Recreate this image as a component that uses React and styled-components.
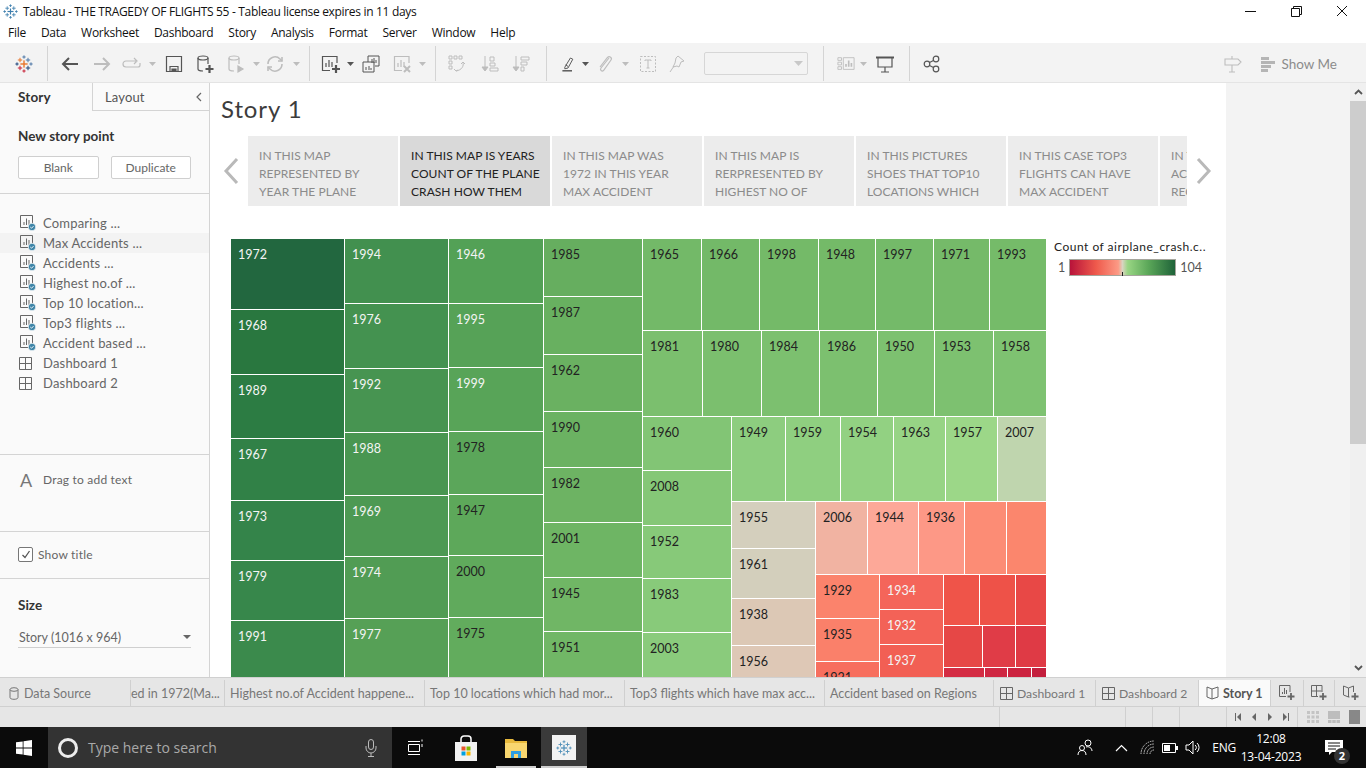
import React from 'react'
import styled, { createGlobalStyle } from 'styled-components'

const SYS = '"Open Sans", "Noto Sans", sans-serif'
const TB = 'Lato, "Open Sans", sans-serif'

const Global = createGlobalStyle`
  html, body { margin: 0; padding: 0; height: 100%; overflow: hidden; background: #fff; }
  * { box-sizing: border-box; }
  #root { height: 768px; }
`

// --- treemap data: size is the pixel extent along the parent's direction
const col = (s, ...c) => ({ d: 'column', s, c })
const row = (s, ...c) => ({ d: 'row', s, c })
const leaf = (t, fill, s, light) => ({ t, fill, s, light })

const tree = row(null,
  col(113,
    leaf('1972', '#22673f', 70, 1), leaf('1968', '#29773f', 64, 1), leaf('1989', '#2c7c43', 63, 1),
    leaf('1967', '#318147', 61, 1), leaf('1973', '#34844a', 59, 1), leaf('1979', '#37874b', 59, 1), leaf('1991', '#3b8a4c', null, 1)),
  col(103,
    leaf('1994', '#42904f', 64, 1), leaf('1976', '#449250', 64, 1), leaf('1992', '#479451', 63, 1),
    leaf('1988', '#499651', 62, 1), leaf('1969', '#4d9953', 60, 1), leaf('1974', '#519c54', 61, 1), leaf('1977', '#56a056', null, 1)),
  col(94,
    leaf('1946', '#53a156', 64, 1), leaf('1995', '#56a257', 63, 1), leaf('1999', '#58a458', 63, 1),
    leaf('1978', '#5ba65a', 62), leaf('1947', '#5da85a', 60), leaf('2000', '#60aa5c', 61), leaf('1975', '#62ac5d', null)),
  col(98,
    leaf('1985', '#66ae5f', 57), leaf('1987', '#68b060', 57), leaf('1962', '#6ab161', 56), leaf('1990', '#6bb262', 55),
    leaf('1982', '#6db363', 54), leaf('2001', '#6eb564', 54), leaf('1945', '#70b665', 53), leaf('1951', '#71b766', null)),
  col(null,
    row(91,
      leaf('1965', '#73b968', 58), leaf('1966', '#73b968', 57), leaf('1998', '#74ba68', 58), leaf('1948', '#74ba68', 56),
      leaf('1997', '#74ba69', 57), leaf('1971', '#75ba69', 55), leaf('1993', '#75bb69', null)),
    row(85,
      leaf('1981', '#7bbf6e', 59), leaf('1980', '#7bbf6e', 58), leaf('1984', '#7cc06f', 57), leaf('1986', '#7cc06f', 57),
      leaf('1950', '#7dc170', 56), leaf('1953', '#7dc170', 58), leaf('1958', '#7ec271', null)),
    row(null,
      col(88,
        leaf('1960', '#82c575', 53), leaf('2008', '#85c777', 54), leaf('1952', '#87c979', 52),
        leaf('1983', '#88ca7a', 53), leaf('2003', '#8acb7c', null)),
      col(null,
        row(84,
          leaf('1949', '#8dcd7f', 53), leaf('1959', '#8fcf80', 54), leaf('1954', '#92d182', 52),
          leaf('1963', '#97d485', 51), leaf('1957', '#9cd788', 51), leaf('2007', '#bfd5ae', null)),
        row(null,
          col(83,
            leaf('1955', '#d4cfbd', 46), leaf('1961', '#d3cfbc', 49), leaf('1938', '#dcc8b5', 46), leaf('1956', '#dec8b6', null)),
          col(null,
            row(72,
              leaf('2006', '#f1b3a2', 51), leaf('1944', '#fda898', 50), leaf('1936', '#fd9886', 45),
              leaf('', '#fc8c75', 41), leaf('', '#fb866d', null)),
            row(null,
              col(63, leaf('1929', '#fb836c', 43), leaf('1935', '#fa806a', 42), leaf('1921', '#f76f5e', null)),
              col(63, leaf('1934', '#f4655a', 34, 1), leaf('1932', '#f36257', 34, 1), leaf('1937', '#f25f54', null, 1)),
              col(null,
                row(50, leaf('', '#ef5449', 35), leaf('', '#ee5248', 35), leaf('', '#e84846', null)),
                row(41, leaf('', '#e64746', 38), leaf('', '#e03c47', 32), leaf('', '#df3a45', null)),
                row(null, leaf('', '#d42c43', 40), leaf('', '#cf2742', 22), leaf('', '#cc2340', 23), leaf('', '#c41f3d', null)))))))))
)

const storyPoints = [
  ['IN THIS MAP', 'REPRESENTED BY', 'YEAR THE PLANE'],
  ['IN THIS MAP IS YEARS', 'COUNT OF THE PLANE', 'CRASH HOW THEM'],
  ['IN THIS MAP WAS', '1972 IN THIS YEAR', 'MAX ACCIDENT'],
  ['IN THIS MAP IS', 'RERPRESENTED BY', 'HIGHEST NO OF'],
  ['IN THIS PICTURES', 'SHOES THAT TOP10', 'LOCATIONS WHICH'],
  ['IN THIS CASE TOP3', 'FLIGHTS CAN HAVE', 'MAX ACCIDENT'],
  ['IN THIS', 'ACCIDENT', 'REGIONS'],
]

const sheets = ['Comparing ...', 'Max Accidents ...', 'Accidents ...', 'Highest no.of ...', 'Top 10 location...', 'Top3 flights ...', 'Accident based ...']

const menus = ['File', 'Data', 'Worksheet', 'Dashboard', 'Story', 'Analysis', 'Format', 'Server', 'Window', 'Help']

// --- drawings
const Line = ({ children, w = 20, h = 20, sw = 1.2 }) => (
  <svg width={w} height={h} viewBox={`0 0 ${w} ${h}`} fill="none" stroke="currentColor" strokeWidth={sw}>{children}</svg>
)

const Plus = ({ x, y, r = 3, w = 1, c }) => (
  <g fill={c} stroke="none">
    <rect x={x - w / 2} y={y - r} width={w} height={r * 2} />
    <rect x={x - r} y={y - w / 2} width={r * 2} height={w} />
  </g>
)

const TableauMark = ({ size = 18, colors }) => {
  const [o, b, r, n] = colors
  return (
    <svg width={size} height={size} viewBox="0 0 18 18">
      <Plus x={9} y={9} r={3.6} w={1.4} c={o} />
      <Plus x={5} y={5} r={2.2} w={1} c={o} />
      <Plus x={13} y={5} r={2.2} w={1} c={b} />
      <Plus x={5} y={13} r={2.2} w={1} c={r} />
      <Plus x={13} y={13} r={2.2} w={1} c={n} />
      <Plus x={9} y={2} r={1.6} w={1} c={b} />
      <Plus x={9} y={16} r={1.6} w={1} c={r} />
      <Plus x={2} y={9} r={1.6} w={1} c={n} />
      <Plus x={16} y={9} r={1.6} w={1} c={b} />
    </svg>
  )
}

const i = {
  logo: <TableauMark size={18} colors={['#e8762c', '#4e79a7', '#c72037', '#1f447a']} />,
  back: <Line sw={2}><path d="M18 10H3M9 4l-6 6 6 6" /></Line>,
  fwd: <Line sw={2}><path d="M2 10h15M11 4l6 6-6 6" /></Line>,
  redo: <Line><path d="M14 7H4a2.500 2.500 0 0 0 0 6h12a2 2 0 0 0 2-2V9M12 4l3 3-3 3" /></Line>,
  caret: <svg width="7" height="4" viewBox="0 0 7 4"><path d="M0 0h7L3.500 4z" fill="currentColor" /></svg>,
  save: <Line sw={1.2}><path d="M2.500 2.500h15v15h-15zM6 17.500v-5h8v5" /><path d="M8 15h4v2.500H8z" fill="currentColor" /></Line>,
  addData: <Line sw={1.2}><ellipse cx="8" cy="4" rx="5" ry="2" /><path d="M3 4v11c0 1 2 2 5 2M13 4v6" /><path d="M14.500 11v8M10.500 15h8" strokeWidth="2.200" /></Line>,
  runData: <Line sw={1.2}><ellipse cx="8" cy="4" rx="5" ry="2" /><path d="M3 4v11c0 1 2 2 5 2M13 4v6" /><path d="M12 12v6l5-3z" fill="currentColor" /></Line>,
  refresh: <Line sw={1.6}><path d="M3 10a7 7 0 0 1 12-5l2 2M17 10a7 7 0 0 1-12 5l-2-2" /><path d="M17 3v4h-4M3 17v-4h4" /></Line>,
  newSheet: <Line sw={1.2}><path d="M17 9V2.500H2.500v14H10" /><path d="M6 13V9M9 13V6M12 13V8" /><path d="M16 11v8M12 15h8" strokeWidth="2.200" /></Line>,
  dupSheet: <Line sw={1}><path d="M7 8V2h11v10h-4" /><path d="M2 8h11v10H2z" /><path d="M11 9V5M13 9V4M15 9V6M5 16v-3M8 16v-4M10 16v-2" /></Line>,
  clearSheet: <Line sw={1.2}><path d="M17 9V2.500H2.500v14H10" /><path d="M6 13V9M9 13V6M12 13V8" /><path d="M12 12l6 6M18 12l-6 6" strokeWidth="2" /></Line>,
  swap: <Line sw={1}><path d="M2 2h3v3H2zM7 2h3v3H7zM12 2h3v3h-3zM2 7h3v3H2zM2 12h3v3H2z" /><path d="M16 8c1 4-1 8-7 9M7 15l2 2 2-1M14 10l2-2 2 2" /></Line>,
  sortAsc: <Line sw={1}><path d="M5 2v14" /><path d="M2 13h6l-3 4z" fill="currentColor" /><path d="M10 3h4v4h-4zM10 9h5v3h-5zM10 14h8v3h-8z" /></Line>,
  sortDesc: <Line sw={1}><path d="M5 2v14" /><path d="M2 13h6l-3 4z" fill="currentColor" /><path d="M10 3h8v3h-8zM10 8h6v3h-6zM10 13h3v4h-3z" /></Line>,
  highlight: <Line sw={1.2}><path d="M6 14L13 2.500l3 1.500-6 11-4 1zM7 11l3 2" /><path d="M3 18.500h12" strokeWidth="1.800" /></Line>,
  clip: <Line sw={1.2}><path d="M14 4l-8 10c-1.500 2 1 4 2.500 2.500L16 6c1.500-2-1.500-4.500-3.500-2.500L5 13" /></Line>,
  textBox: <Line sw={1}><path d="M2.500 2.500h15v15h-15z" strokeDasharray="2 1.500" /><path d="M7 7V6h6v1M10 6v8M8.500 14h3" /></Line>,
  pin: <Line sw={1}><path d="M11 2l6 5-3 1-2 5-2-1-4 1 2-4 1-5zM7 12l-4 6" /></Line>,
  showCards: <Line sw={1}><path d="M1 3h4v3H1zM1 8h4v3H1zM1 13h4v3H1zM7 3h12v13H7z" /><path d="M10 13v-3M13 13V6M16 13V9" strokeWidth="1.800" /></Line>,
  present: <Line sw={1.2}><path d="M1 3.500h18" strokeWidth="2" /><path d="M3 4v9h14V4M10 13v5M6 18h8" /></Line>,
  share: <Line sw={1.2}><circle cx="5" cy="10" r="2.800" /><circle cx="14" cy="5" r="2.800" /><circle cx="14" cy="15" r="2.800" /><path d="M7.500 8.500l4-2M7.500 11.500l4 2" /></Line>,
  sign: <Line sw={1.1}><path d="M2 5h13l3 3-3 3H2zM9 2v3M9 11v7M6 18h6" /></Line>,
}

const SheetIcon = () => (
  <IconBox>
    <svg width="18" height="18" viewBox="0 0 18 18" fill="none" stroke="#666" strokeWidth="1">
      <path d="M1.500 1.500h12v12h-12z" />
      <path d="M5 11V8M7.500 11V4.500M10 11V6" />
      <circle cx="13" cy="13" r="3.800" fill="#3d85a8" stroke="#fafafa" strokeWidth=".8" />
      <path d="M11.300 13l1.200 1.200 2-2" stroke="#fff" />
    </svg>
  </IconBox>
)

const GridIcon = ({ size = 13 }) => (
  <svg width={size} height={size} viewBox="0 0 13 13" fill="none" stroke="#666" strokeWidth="1">
    <path d="M.5.5h12v12H.5zM6.500.5v12M.5 6.500h12" />
  </svg>
)

const BookIcon = () => (
  <svg width="13" height="14" viewBox="0 0 13 14" fill="none" stroke="#666" strokeWidth="1">
    <path d="M1 1l5 2 6-2v10l-6 2-5-2zM6 3v10" />
  </svg>
)

const AddTabIcon = ({ kind }) => (
  <svg width="16" height="16" viewBox="0 0 16 16" fill="none" stroke="#666" strokeWidth="1">
    {kind === 0 && <path d="M11 7V.5H.5v11H7M3.500 9V7M5.500 9V3M7.500 9V5" />}
    {kind === 1 && <path d="M11 7V.5H.5v11H7M5.500.5v11M.5 6h10" />}
    {kind === 2 && <path d="M.5 1l5 2 5-2v6M.5 1v9l5 2h1M5.500 3v9" />}
    <path d="M12 8v7M8.500 11.500h7" strokeWidth="1.800" />
  </svg>
)

const tools = [
  [32, i.logo, 0, 1], [14, null, 0, 0, 1], [32, i.back], [32, i.fwd, 1], [28, i.redo, 1], [12, i.caret, 1],
  [32, i.save], [30, i.addData], [32, i.runData, 1], [8, i.caret, 1], [30, i.refresh, 1], [12, i.caret, 1],
  [14, null, 0, 0, 1], [28, i.newSheet], [12, i.caret], [30, i.dupSheet], [32, i.clearSheet, 1], [8, i.caret, 1],
  [18, null, 0, 0, 1], [26, i.swap, 1], [40, i.sortAsc, 1], [22, i.sortDesc, 1], [28, null, 0, 0, 1],
  [16, i.highlight], [18, i.caret], [22, i.clip, 1], [18, i.caret, 1], [28, i.textBox, 1], [30, i.pin, 1],
]
const tools2 = [
  [28, null, 0, 0, 1], [18, i.showCards, 1], [16, i.caret, 1], [28, i.present], [20, null, 0, 0, 1], [26, i.share],
]

// --- treemap renderer
function TreeNode({ node }) {
  if (node.c) {
    return (
      <Split $dir={node.d} $size={node.s}>
        {node.c.map((n, idx) => <TreeNode key={idx} node={n} />)}
      </Split>
    )
  }
  return <Tile $fill={node.fill} $size={node.s} $light={node.light}>{node.t}</Tile>
}

const Tool = ({ t }) => {
  const [w, icon, off, , sep] = t
  return <ToolSlot $w={w} $off={off}>{sep ? <ToolSep /> : icon}</ToolSlot>
}

export default function App() {
  return (
    <Page>
      <Global />
      <TitleBar>
        <TitleIcon><TableauMark size={15} colors={['#3e7fae', '#3e7fae', '#3e7fae', '#3e7fae']} /></TitleIcon>
        <TitleText>Tableau - THE TRAGEDY OF FLIGHTS 55 - Tableau license expires in 11 days</TitleText>
        <WinControls>
          <WinBtn>
            <svg width="11" height="11" viewBox="0 0 11 11"><path d="M0 5.500h11" stroke="#111" /></svg>
          </WinBtn>
          <WinBtn>
            <svg width="11" height="11" viewBox="0 0 11 11" fill="none" stroke="#111"><path d="M.5 2.500h8v8h-8zM2.500 2.500v-2h8v8h-2" /></svg>
          </WinBtn>
          <WinBtn>
            <svg width="12" height="12" viewBox="0 0 12 12" stroke="#111"><path d="M1 1l10 10M11 1L1 11" /></svg>
          </WinBtn>
        </WinControls>
      </TitleBar>

      <MenuBar>{menus.map(m => <MenuItem key={m}>{m}</MenuItem>)}</MenuBar>

      <Toolbar>
        {tools.map((t, idx) => <Tool key={idx} t={t} />)}
        <FakeSelect><svg width="9" height="5" viewBox="0 0 9 5"><path d="M0 0h9L4.500 5z" fill="#c8c8c8" /></svg></FakeSelect>
        {tools2.map((t, idx) => <Tool key={idx} t={t} />)}
        <ToolRight>
          <ToolSlot $w={20} $off={1}>{i.sign}</ToolSlot>
          <ShowMe>
            <svg width="15" height="16" viewBox="0 0 15 16">
              <path d="M0 1h8v3H0zM0 5h14v3H0zM0 9h10v3H0zM0 13h7v3H0z" fill="#b5b5b5" />
            </svg>
            Show Me
          </ShowMe>
        </ToolRight>
      </Toolbar>

      <Main>
        <Sidebar>
          <SideTabs>
            <SideTab $active>Story</SideTab>
            <SideTab>
              Layout
              <Collapse>
                <svg width="7" height="10" viewBox="0 0 7 10" fill="none" stroke="#666" strokeWidth="1.200"><path d="M6 1L2 5l4 4" /></svg>
              </Collapse>
            </SideTab>
          </SideTabs>
          <NewPoint>
            <Heading>New story point</Heading>
            <ButtonRow>
              <SideButton>Blank</SideButton>
              <SideButton>Duplicate</SideButton>
            </ButtonRow>
          </NewPoint>
          <SheetList>
            {sheets.map((s, idx) => (
              <SheetRow key={s} $hover={idx === 1}><SheetIcon /><SheetName>{s}</SheetName></SheetRow>
            ))}
            <SheetRow><IconBox><GridIcon /></IconBox><SheetName>Dashboard 1</SheetName></SheetRow>
            <SheetRow><IconBox><GridIcon /></IconBox><SheetName>Dashboard 2</SheetName></SheetRow>
          </SheetList>
          <TextDrag>
            <BigA>A</BigA>
            <SheetName>Drag to add text</SheetName>
          </TextDrag>
          <ShowTitle>
            <Check>
              <svg width="10" height="9" viewBox="0 0 10 9" fill="none" stroke="#555" strokeWidth="1.300"><path d="M1.500 5l2.500 2.500L8.500 1" /></svg>
            </Check>
            <SheetName>Show title</SheetName>
          </ShowTitle>
          <SizeBlock>
            <Heading>Size</Heading>
            <SizeSelect>
              Story (1016 x 964)
              <svg width="8" height="4" viewBox="0 0 8 4"><path d="M0 0h8L4 4z" fill="#666" /></svg>
            </SizeSelect>
          </SizeBlock>
        </Sidebar>

        <Canvas>
          <StorySheet>
            <StoryTitle>Story 1</StoryTitle>
            <Navigator>
              <NavArrow $left>
                <svg width="16" height="28" viewBox="0 0 16 28" fill="none" stroke="#b9b9b9" strokeWidth="3"><path d="M14 2L3 14l11 12" /></svg>
              </NavArrow>
              <Points>
                {storyPoints.map((p, idx) => (
                  <Point key={idx} $active={idx === 1}>
                    {p.map(l => <PointLine key={l}>{l}</PointLine>)}
                  </Point>
                ))}
              </Points>
              <NavArrow>
                <svg width="16" height="28" viewBox="0 0 16 28" fill="none" stroke="#b9b9b9" strokeWidth="3"><path d="M2 2l11 12L2 26" /></svg>
              </NavArrow>
            </Navigator>
            <VizArea>
              <TreeWrap><TreeNode node={tree} /></TreeWrap>
              <Legend>
                <LegendTitle>Count of airplane_crash.c..</LegendTitle>
                <LegendScale>
                  <LegendNum>1</LegendNum>
                  <LegendBar><LegendTick /></LegendBar>
                  <LegendNum>104</LegendNum>
                </LegendScale>
              </Legend>
            </VizArea>
          </StorySheet>
          <Gutter />
          <ScrollTrack>
            <ScrollBtn>
              <svg width="9" height="6" viewBox="0 0 9 6" fill="none" stroke="#555" strokeWidth="1.800"><path d="M1 5l3.500-3.500L8 5" /></svg>
            </ScrollBtn>
            <ScrollThumb />
            <ScrollBtn>
              <svg width="9" height="6" viewBox="0 0 9 6" fill="none" stroke="#555" strokeWidth="1.800"><path d="M1 1l3.500 3.500L8 1" /></svg>
            </ScrollBtn>
          </ScrollTrack>
        </Canvas>
      </Main>

      <TabBar>
        <SheetTab $w={131} $pad={9} $gap={5}>
          <svg width="10" height="13" viewBox="0 0 10 13" fill="none" stroke="#777"><ellipse cx="5" cy="2.500" rx="4" ry="1.800" /><path d="M1 2.500v8c0 1 1.500 1.800 4 1.800s4-.8 4-1.800v-8" /></svg>
          Data Source
        </SheetTab>
        <SheetTab $w={94} $pad={0}>ed in 1972(Ma...</SheetTab>
        <SheetTab $w={200}>Highest no.of Accident happene...</SheetTab>
        <SheetTab $w={200}>Top 10 locations which had mor...</SheetTab>
        <SheetTab $w={200}>Top3 flights which have max acc...</SheetTab>
        <SheetTab $w={169}>Accident based on Regions</SheetTab>
        <SheetTab $w={102} $gap={4} $pad={6}><GridIcon /><DashName>Dashboard 1</DashName></SheetTab>
        <SheetTab $w={103} $gap={4} $pad={6}><GridIcon /><DashName>Dashboard 2</DashName></SheetTab>
        <SheetTab $w={72} $active $pad={7} $gap={4}><BookIcon />Story 1</SheetTab>
        <SheetTab $w={33} $center><AddTabIcon kind={0} /></SheetTab>
        <SheetTab $w={31} $center><AddTabIcon kind={1} /></SheetTab>
        <SheetTab $w={32} $center><AddTabIcon kind={2} /></SheetTab>
      </TabBar>

      <StatusBar>
        <StatusCell $w={1000} />
        <StatusCell $w={126} />
        <StatusCell $w={27} />
        <StatusCell $w={27} />
        <StatusCell $w={47} />
        <StatusNav>
          <svg width="8" height="8" viewBox="0 0 8 8"><path d="M1 0h1v8H1zM7 0v8L3 4z" fill="#666" /></svg>
          <svg width="8" height="8" viewBox="0 0 8 8"><path d="M6 0v8L2 4z" fill="#666" /></svg>
          <svg width="8" height="8" viewBox="0 0 8 8"><path d="M2 0v8l4-4z" fill="#666" /></svg>
          <svg width="8" height="8" viewBox="0 0 8 8"><path d="M7 0h-1v8h1zM1 0v8l4-4z" fill="#666" /></svg>
        </StatusNav>
        <StatusViews>
          <svg width="12" height="12" viewBox="0 0 12 12"><path d="M0 0h3v3H0zM4.500 0h3v3h-3zM9 0h3v3H9zM0 4.500h3v3H0zM4.500 4.500h3v3h-3zM9 4.500h3v3H9zM0 9h3v3H0zM4.500 9h3v3h-3zM9 9h3v3H9z" fill="#c4c4c4" /></svg>
          <svg width="12" height="12" viewBox="0 0 12 12"><path d="M0 0h12v8H0zM0 9h3.500v3H0zM4.250 9h3.500v3h-3.500zM8.500 9H12v3H8.500z" fill="#bdbdbd" /></svg>
          <svg width="11" height="14" viewBox="0 0 11 14"><path d="M0 0h11v14H0z" fill="#888" /></svg>
        </StatusViews>
      </StatusBar>

      <Taskbar>
        <StartBtn>
          <svg width="16" height="16" viewBox="0 0 16 16" fill="#fff"><path d="M0 2.300l6.700-.9v6.200H0zM7.500 1.300L16 0v7.600H7.500zM0 8.400h6.700v6.200L0 13.700zM7.500 8.400H16V16l-8.500-1.300z" /></svg>
        </StartBtn>
        <SearchBox>
          <Cortana />
          <SearchText>Type here to search</SearchText>
          <Mic>
            <svg width="12" height="18" viewBox="0 0 12 18" fill="none" stroke="#bbb" strokeWidth="1"><rect x="3.500" y=".5" width="5" height="10" rx="2.500" /><path d="M1 7v2a5 5 0 0 0 10 0V7M6 14v3M3 17.500h6" /></svg>
          </Mic>
        </SearchBox>
        <TaskApp $w={48}>
          <svg width="16" height="18" viewBox="0 0 16 18" fill="none" stroke="#fff"><path d="M.5 5.500h11v7H.5zM0 2.500h12M0 15.500h12M14 .5v2M14 5v3" /></svg>
        </TaskApp>
        <TaskApp $w={52}>
          <svg width="24" height="26" viewBox="0 0 24 26">
            <path d="M7 7V4a3 3 0 0 1 3-3h4a3 3 0 0 1 3 3v3" fill="none" stroke="#fff" strokeWidth="1.500" />
            <path d="M1 7h22v19H1z" fill="#f2f2f2" />
            <path d="M7.500 11.500h4v4h-4z" fill="#e8552c" /><path d="M12.500 11.500h4v4h-4z" fill="#7fb800" />
            <path d="M7.500 16.500h4v4h-4z" fill="#00a1e0" /><path d="M12.500 16.500h4v4h-4z" fill="#f7b500" />
          </svg>
        </TaskApp>
        <TaskApp $w={40} $mx={4} $open>
          <svg width="22" height="22" viewBox="0 0 22 22">
            <path d="M0 2h8l2 2h12v17H0z" fill="#e8b93c" /><path d="M0 6h22v15H0z" fill="#f8d66f" />
            <path d="M6 21v-7h10v7h-3v-4H9v4z" fill="#2f9fe0" />
          </svg>
        </TaskApp>
        <TaskApp $w={46} $active $ml={1}>
          <TileIcon><TableauMark size={16} colors={['#4f8fb8', '#4f8fb8', '#4f8fb8', '#4f8fb8']} /></TileIcon>
        </TaskApp>
        <Tray>
          <TrayIcon $w={24}>
            <svg width="17" height="17" viewBox="0 0 17 17" fill="none" stroke="#fff"><circle cx="11" cy="4" r="3" /><circle cx="5" cy="9" r="2.500" /><path d="M1 16c0-3 1.500-4.500 4-4.500S9 13 9 16M9 8c3-1 6 1 6 4" /></svg>
          </TrayIcon>
          <TrayIcon $w={14} $ml={17}>
            <svg width="13" height="8" viewBox="0 0 13 8" fill="none" stroke="#fff" strokeWidth="1.200"><path d="M1 7l5.500-5.500L12 7" /></svg>
          </TrayIcon>
          <TrayIcon $w={16} $ml={11}>
            <svg width="15" height="15" viewBox="0 0 15 15" fill="none" stroke="#ccc"><path d="M1 14A13 13 0 0 1 14 1M4 14A10 10 0 0 1 14 4M7 14a7 7 0 0 1 7-7M10 14a4 4 0 0 1 4-4" strokeDasharray="1.500 .8" /></svg>
          </TrayIcon>
          <TrayIcon $w={16} $ml={7}>
            <svg width="16" height="10" viewBox="0 0 16 10" fill="none" stroke="#fff"><path d="M.5.5h13v9H.5z" /><path d="M2 2h6v6H2z" fill="#fff" stroke="none" /><path d="M14 3h2v4h-2z" fill="#fff" stroke="none" /></svg>
          </TrayIcon>
          <TrayIcon $w={18} $ml={6}>
            <svg width="16" height="15" viewBox="0 0 16 15" fill="none" stroke="#fff"><path d="M1 5h3l4-4v13l-4-4H1zM10 5a3 3 0 0 1 0 5M12 3a6 6 0 0 1 0 9" /></svg>
          </TrayIcon>
          <TrayLang>ENG</TrayLang>
          <Clock><span>12:08</span><span>13-04-2023</span></Clock>
          <Notify>
            <svg width="18" height="16" viewBox="0 0 18 16"><path d="M0 0h18v12H7l-3 3v-3H0z" fill="#fff" /><path d="M3 3h12M3 6h12M3 9h8" stroke="#111" /></svg>
            <Badge>2</Badge>
          </Notify>
        </Tray>
      </Taskbar>
    </Page>
  )
}

const Page = styled.div`
  width: 1366px;
  height: 768px;
  display: flex;
  flex-direction: column;
  overflow: hidden;
  font-family: ${TB};
  background: #fff;
`
const TitleBar = styled.div`
  height: 22px;
  flex: none;
  display: flex;
  align-items: center;
  font-family: ${SYS};
`
const TitleIcon = styled.div`
  width: 23px;
  padding-left: 3px;
  display: flex;
  align-items: center;
`
const TitleText = styled.div`
  font-size: 12px;
  letter-spacing: -0.32px;
  color: #111;
`
const WinControls = styled.div`
  margin-left: auto;
  display: flex;
`
const WinBtn = styled.div`
  width: 46px;
  height: 22px;
  display: flex;
  align-items: center;
  justify-content: center;
  position: relative;
  left: -1px;
`
const MenuBar = styled.div`
  height: 21px;
  flex: none;
  display: flex;
  align-items: center;
  gap: 15px;
  padding-left: 8px;
  font-family: ${SYS};
  font-size: 12px;
  letter-spacing: -0.28px;
  color: #111;
`
const MenuItem = styled.span``
const Toolbar = styled.div`
  height: 40px;
  flex: none;
  background: #f3f3f3;
  display: flex;
  align-items: center;
  padding: 2px 0 0 8px;
  border-bottom: 1px solid #e4e4e4;
`
const ToolSlot = styled.div`
  flex: 0 0 ${p => p.$w}px;
  width: ${p => p.$w}px;
  height: 36px;
  display: flex;
  align-items: center;
  justify-content: center;
  color: ${p => (p.$off ? '#bdbdbd' : '#555')};
`
const ToolSep = styled.div`
  width: 1px;
  height: 35px;
  background: #d4d4d4;
`
const FakeSelect = styled.div`
  width: 104px;
  height: 23px;
  margin-left: 12px;
  margin-right: 1px;
  border: 1px solid #d6d6d6;
  border-radius: 2px;
  display: flex;
  align-items: center;
  justify-content: flex-end;
  padding-right: 4px;
  flex-shrink: 0;
`
const ToolRight = styled.div`
  margin-left: auto;
  display: flex;
  align-items: center;
  padding-right: 29px;
  gap: 18px;
`
const ShowMe = styled.div`
  display: flex;
  align-items: center;
  gap: 5px;
  font-size: 13.500px;
  color: #8c8c8c;
`
const Main = styled.div`
  height: 594px;
  flex: none;
  display: flex;
  overflow: hidden;
`
const Sidebar = styled.div`
  width: 210px;
  flex: 0 0 210px;
  background: #fafafa;
  border-right: 1px solid #d4d4d4;
  display: flex;
  flex-direction: column;
`
const SideTabs = styled.div`
  height: 28px;
  flex: none;
  display: flex;
`
const SideTab = styled.div`
  position: relative;
  width: ${p => (p.$active ? '92px' : 'auto')};
  flex: ${p => (p.$active ? 'none' : 1)};
  padding: 6px 0 0 ${p => (p.$active ? '18px' : '12px')};
  font-size: ${p => (p.$active ? '13.500px' : '13px')};
  letter-spacing: .15px;
  font-weight: ${p => (p.$active ? 700 : 400)};
  color: ${p => (p.$active ? '#333' : '#555')};
  border-left: ${p => (p.$active ? 'none' : '1px solid #d4d4d4')};
  border-bottom: ${p => (p.$active ? 'none' : '1px solid #d4d4d4')};
`
const Collapse = styled.span`
  position: absolute;
  right: 7px;
  top: 9px;
  display: flex;
`
const NewPoint = styled.div`
  height: 83px;
  flex: none;
  padding: 17px 18px 0;
  border-bottom: 1px solid #d4d4d4;
`
const Heading = styled.div`
  font-size: 13.500px;
  font-weight: 700;
  color: #333;
  line-height: 16px;
`
const ButtonRow = styled.div`
  display: flex;
  gap: 12px;
  margin-top: 12px;
`
const SideButton = styled.div`
  width: 81px;
  height: 23px;
  background: #fff;
  border: 1px solid #cfcfcf;
  border-radius: 2px;
  font-size: 12px;
  color: #666;
  display: flex;
  align-items: center;
  justify-content: center;
`
const SheetList = styled.div`
  height: 261px;
  flex: none;
  padding-top: 19px;
  border-bottom: 1px solid #d4d4d4;
`
const SheetRow = styled.div`
  height: 20px;
  display: flex;
  align-items: center;
  padding-left: 19px;
  background: ${p => (p.$hover ? '#f3f3f3' : 'transparent')};
`
const IconBox = styled.div`
  width: 24px;
  display: flex;
  align-items: center;
`
const SheetName = styled.span`
  font-size: 13px;
  letter-spacing: .2px;
  color: #666;
  white-space: nowrap;
`
const TextDrag = styled.div`
  height: 77px;
  flex: none;
  padding: 16px 0 0 20px;
  display: flex;
  align-items: flex-start;
  border-bottom: 1px solid #d4d4d4;
  ${SheetName} { font-size: 12px; line-height: 18px; }
`
const BigA = styled.span`
  width: 23px;
  font-size: 18px;
  line-height: 18px;
  color: #777;
`
const ShowTitle = styled.div`
  height: 47px;
  flex: none;
  padding: 15px 0 0 18px;
  display: flex;
  align-items: flex-start;
  gap: 5px;
  border-bottom: 1px solid #d4d4d4;
  ${SheetName} { font-size: 12px; line-height: 15px; }
`
const Check = styled.div`
  width: 15px;
  height: 15px;
  background: #fff;
  border: 1px solid #777;
  border-radius: 2px;
  display: flex;
  align-items: center;
  justify-content: center;
`
const SizeBlock = styled.div`
  padding: 18px 18px 0;
`
const SizeSelect = styled.div`
  margin-top: 14px;
  height: 21px;
  padding-left: 1px;
  border-bottom: 1px solid #cfcfcf;
  display: flex;
  align-items: center;
  justify-content: space-between;
  font-size: 12.500px;
  color: #666;
`
const Canvas = styled.div`
  flex: 1;
  display: flex;
  background: #f3f3f3;
  min-width: 0;
`
const StorySheet = styled.div`
  width: 1016px;
  flex: 0 0 1016px;
  background: #fff;
  display: flex;
  flex-direction: column;
`
const StoryTitle = styled.div`
  height: 53px;
  flex: none;
  padding: 10px 0 0 11px;
  font-size: 24px;
  letter-spacing: .9px;
  line-height: 32px;
  color: #3c3c3c;
`
const Navigator = styled.div`
  height: 70px;
  flex: none;
  display: flex;
  align-items: center;
`
const NavArrow = styled.div`
  width: ${p => (p.$left ? '38px' : '26px')};
  padding-left: ${p => (p.$left ? '13px' : '9px')};
  display: flex;
`
const Points = styled.div`
  width: 939px;
  height: 70px;
  display: flex;
  gap: 2px;
  overflow: hidden;
`
const Point = styled.div`
  flex: 0 0 150px;
  height: 70px;
  padding: 11px 0 0 11px;
  background: ${p => (p.$active ? '#d9d9d9' : '#ececec')};
  color: ${p => (p.$active ? '#222' : '#8b8b8b')};
`
const PointLine = styled.div`
  font-size: 12px;
  letter-spacing: .05px;
  line-height: 18px;
  white-space: nowrap;
`
const VizArea = styled.div`
  margin-top: 33px;
  flex: none;
  padding-left: 21px;
  display: flex;
  gap: 8px;
`
const TreeWrap = styled.div`
  width: 815px;
  height: 480px;
  display: flex;
  & > div { flex: 1; }
`
const Split = styled.div`
  display: flex;
  flex-direction: ${p => p.$dir};
  gap: 1px;
  min-width: 0;
  min-height: 0;
  flex: ${p => (p.$size ? `0 0 ${p.$size}px` : '1 1 0')};
`
const Tile = styled.div`
  flex: ${p => (p.$size ? `0 0 ${p.$size}px` : '1 1 0')};
  min-width: 0;
  min-height: 0;
  overflow: hidden;
  background: ${p => p.$fill};
  color: ${p => (p.$light ? '#f4f4f4' : '#222')};
  padding: 8px 0 0 7px;
  font-size: 12.500px;
  line-height: 15px;
`
const Legend = styled.div`
  padding-top: 1px;
`
const LegendTitle = styled.div`
  font-size: 12px;
  letter-spacing: .5px;
  line-height: 14px;
  color: #222;
  white-space: nowrap;
`
const LegendScale = styled.div`
  display: flex;
  align-items: center;
  margin-top: 5px;
  padding-left: 4px;
  gap: 4px;
`
const LegendNum = styled.span`
  font-size: 12.500px;
  color: #555;
`
const LegendBar = styled.div`
  position: relative;
  width: 107px;
  height: 17px;
  border: 1px solid #a5a59c;
  background: linear-gradient(to right, #b8133a, #ef5a4c 25%, #fc9a85 46%, #d8d4c0 50%, #98d583 55%, #5aa658 75%, #1f6339);
`
const LegendTick = styled.div`
  position: absolute;
  left: 52px;
  bottom: -1px;
  width: 1px;
  height: 4px;
  background: #222;
`
const Gutter = styled.div`
  flex: 1;
`
const ScrollTrack = styled.div`
  width: 16px;
  flex: 0 0 16px;
  background: #f0f0f0;
  display: flex;
  flex-direction: column;
`
const ScrollBtn = styled.div`
  height: 18px;
  flex: none;
  display: flex;
  align-items: center;
  justify-content: center;
`
const ScrollThumb = styled.div`
  height: 343px;
  flex: none;
  background: #cdcdcd;
  margin-bottom: auto;
`
const TabBar = styled.div`
  height: 30px;
  flex: none;
  padding-top: 2px;
  background: #e6e6e6;
  border-top: 1px solid #d0d0d0;
  border-bottom: 1px solid #d0d0d0;
  display: flex;
`
const SheetTab = styled.div`
  flex: 0 0 ${p => p.$w}px;
  display: flex;
  align-items: center;
  justify-content: ${p => (p.$center ? 'center' : 'flex-start')};
  gap: ${p => p.$gap ?? 6}px;
  padding-left: ${p => (p.$center ? 0 : p.$pad ?? 5)}px;
  border-right: 1px solid #d0d0d0;
  background: ${p => (p.$active ? '#fafafa' : 'transparent')};
  font-size: 12.500px;
  font-weight: ${p => (p.$active ? 700 : 400)};
  color: ${p => (p.$active ? '#555' : '#777')};
  white-space: nowrap;
  overflow: hidden;
`
const DashName = styled.span`
  font-size: 12.200px;
`
const StatusBar = styled.div`
  height: 20px;
  flex: none;
  background: #e6e6e6;
  display: flex;
`
const StatusCell = styled.div`
  flex: 0 0 ${p => p.$w}px;
  border-right: 1px solid #d0d0d0;
`
const StatusNav = styled.div`
  flex: 0 0 71px;
  padding: 0 7px;
  border-right: 1px solid #d0d0d0;
  display: flex;
  align-items: center;
  justify-content: space-between;
`
const StatusViews = styled.div`
  flex: 1;
  padding: 0 6px 0 9px;
  display: flex;
  align-items: center;
  justify-content: space-between;
`
const Taskbar = styled.div`
  height: 41px;
  flex: none;
  background: #0b0b0b;
  display: flex;
  align-items: stretch;
  font-family: ${SYS};
`
const StartBtn = styled.div`
  width: 48px;
  display: flex;
  align-items: center;
  justify-content: center;
`
const SearchBox = styled.div`
  width: 344px;
  background: #333;
  display: flex;
  align-items: center;
  padding-left: 10px;
`
const Cortana = styled.div`
  width: 20px;
  height: 20px;
  border-radius: 50%;
  border: 3px solid #ececec;
`
const SearchText = styled.span`
  margin-left: 10px;
  font-size: 14px;
  color: #a9a9a9;
`
const Mic = styled.div`
  margin-left: auto;
  margin-right: 15px;
  display: flex;
`
const TaskApp = styled.div`
  flex: 0 0 ${p => p.$w}px;
  margin: 0 ${p => p.$mx || 0}px 0 ${p => p.$ml ?? p.$mx ?? 0}px;
  display: flex;
  align-items: center;
  justify-content: center;
  background: ${p => (p.$active ? '#3a3a3a' : 'transparent')};
  box-shadow: ${p => (p.$active || p.$open ? 'inset 0 -2px 0 #cfcfcf' : 'none')};
`
const TileIcon = styled.div`
  width: 24px;
  height: 25px;
  background: #f2f2f2;
  display: flex;
  align-items: center;
  justify-content: center;
`
const Tray = styled.div`
  margin-left: auto;
  display: flex;
  align-items: center;
  padding-right: 23px;
`
const TrayIcon = styled.div`
  width: ${p => p.$w}px;
  margin-left: ${p => p.$ml || 0}px;
  display: flex;
  justify-content: center;
`
const TrayLang = styled.span`
  margin-left: 10px;
  font-size: 12px;
  letter-spacing: -.2px;
  color: #fff;
`
const Clock = styled.div`
  margin-left: 2px;
  width: 66px;
  display: flex;
  flex-direction: column;
  align-items: center;
  font-size: 12px;
  letter-spacing: -.2px;
  line-height: 18px;
  color: #fff;
  white-space: nowrap;
`
const Notify = styled.div`
  position: relative;
  margin-left: 21px;
  display: flex;
`
const Badge = styled.span`
  position: absolute;
  right: -7px;
  bottom: -8px;
  width: 16px;
  height: 16px;
  border-radius: 50%;
  background: #333;
  color: #fff;
  font-size: 11px;
  font-weight: 700;
  line-height: 16px;
  text-align: center;
`
